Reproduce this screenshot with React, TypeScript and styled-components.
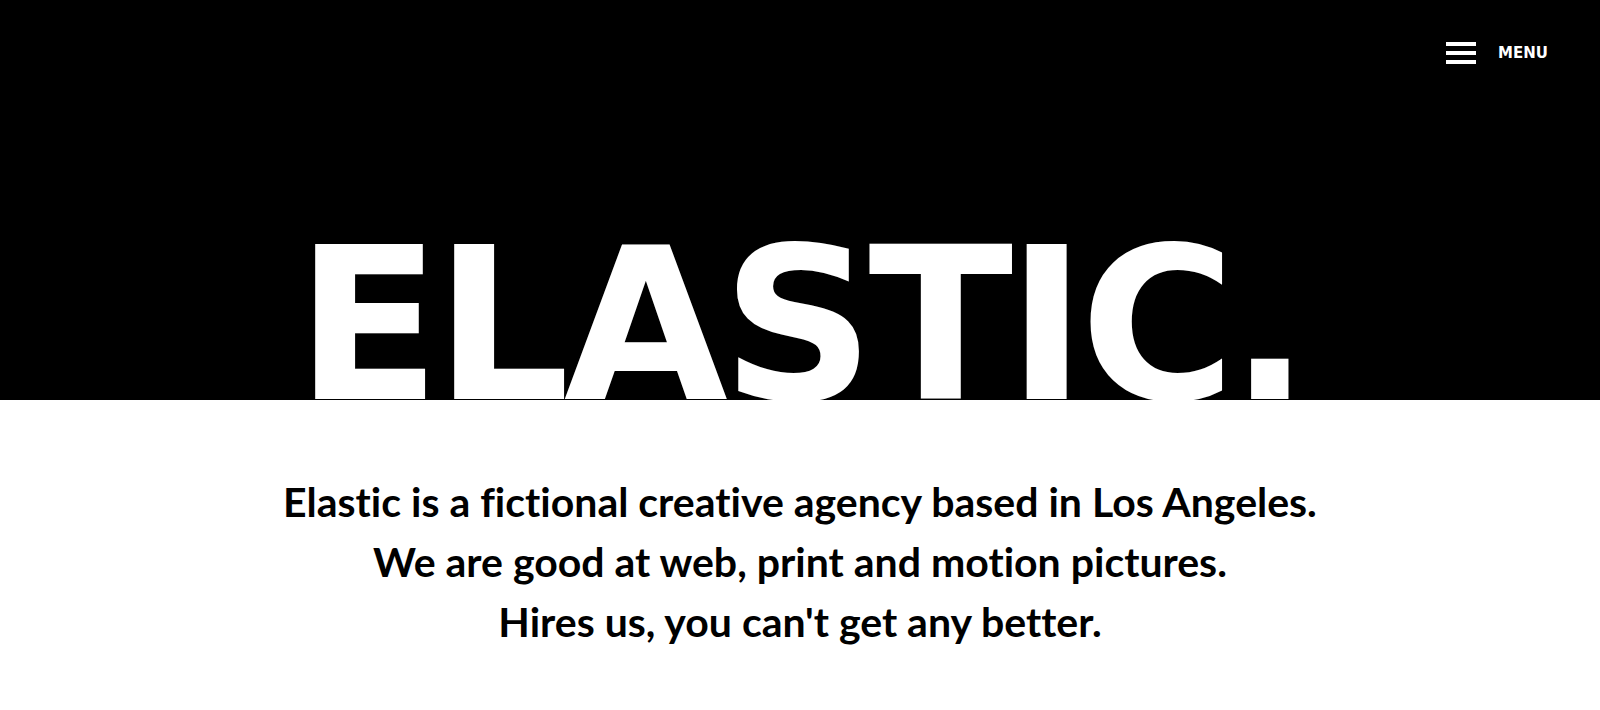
import React from 'react';
import styled, { createGlobalStyle } from 'styled-components';

const GlobalStyle = createGlobalStyle`
  html,
  body {
    margin: 0;
    padding: 0;
    background: #ffffff;
  }

  body {
    font-family: 'Lato', 'Liberation Sans', sans-serif;
    color: #000000;
  }
`;

const Hero = styled.header`
  height: 400px;
  background: #000000;
  color: #ffffff;
  display: flex;
  flex-direction: column;
  overflow: hidden;
`;

const TopBar = styled.nav`
  display: flex;
  justify-content: flex-end;
  padding: 41px 52px 0 0;
`;

const MenuButton = styled.button`
  display: flex;
  align-items: center;
  gap: 22px;
  padding: 0;
  border: none;
  background: none;
  color: #ffffff;
  cursor: pointer;
`;

const Burger = styled.span`
  display: flex;
  flex-direction: column;
  gap: 5px;
  width: 30px;
`;

const BurgerBar = styled.span`
  display: block;
  height: 4px;
  background: #ffffff;
`;

const MenuLabel = styled.span`
  font-family: 'DejaVu Sans', sans-serif;
  font-weight: 700;
  font-size: 15px;
  line-height: 22px;
  padding-top: 1px;
`;

const Title = styled.h1`
  margin: auto 0 0 0;
  text-align: center;
  font-family: 'DejaVu Sans', sans-serif;
  font-weight: 700;
  font-size: 212px;
  line-height: 0.692;
  letter-spacing: -6px;
  white-space: nowrap;
`;

const Intro = styled.section`
  padding: 72px 0 40px;
  text-align: center;
`;

const IntroText = styled.p`
  margin: 0;
  font-family: 'Lato', sans-serif;
  font-weight: 700;
  font-size: 41px;
  line-height: 60px;
  font-variant-ligatures: none;
`;

export default function App() {
  return (
    <>
      <GlobalStyle />
      <Hero>
        <TopBar>
          <MenuButton type="button">
            <Burger>
              <BurgerBar />
              <BurgerBar />
              <BurgerBar />
            </Burger>
            <MenuLabel>MENU</MenuLabel>
          </MenuButton>
        </TopBar>
        <Title>ELASTIC.</Title>
      </Hero>
      <Intro>
        <IntroText>
          Elastic is a fictional creative agency based in Los Angeles.
          <br />
          We are good at web, print and motion pictures.
          <br />
          Hires us, you can't get any better.
        </IntroText>
      </Intro>
    </>
  );
}
